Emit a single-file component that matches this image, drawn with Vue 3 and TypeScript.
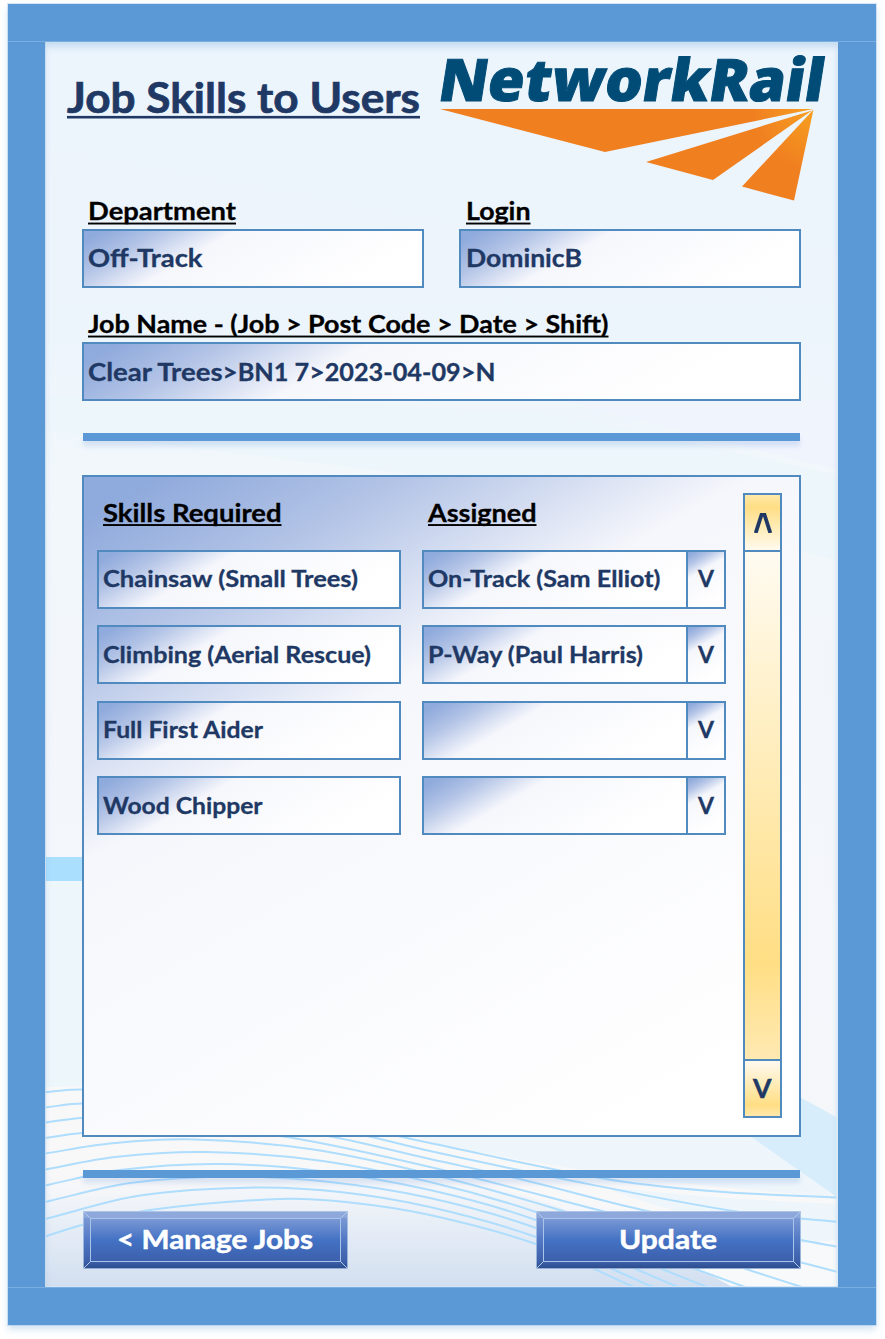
<script setup lang="ts">
import { h, type FunctionalComponent } from 'vue'

interface LabelProps {
  text: string
  width: number
  size: number
  underline?: number
  cuts?: number[]
}

// Text fitted to a fixed advance width; the box is exactly as tall as the capitals.
// With cuts, the text is broken around each ">" and every piece starts at its own stop.
const Label: FunctionalComponent<LabelProps> = (p) => {
  const cap = Math.round(p.size * 0.72 * 10) / 10
  const base = { x: 0, y: cap, 'font-size': p.size, fill: 'currentColor' }
  const cuts = p.cuts
  const body = cuts
    ? h('text', base, p.text.split(/(>)/).map((s, i) =>
        h('tspan', { x: cuts[i], textLength: cuts[i + 1] - cuts[i], lengthAdjust: 'spacingAndGlyphs' }, s)))
    : h('text', { ...base, textLength: p.width, lengthAdjust: 'spacingAndGlyphs' }, p.text)
  const kids = [body]
  if (p.underline) {
    kids.push(h('rect', { x: 0, y: cap + p.underline * 1.15, width: p.width, height: p.underline, fill: 'currentColor', stroke: 'none' }))
  }
  return h('svg', { class: 'label', width: p.width, height: cap }, kids)
}
Label.props = ['text', 'width', 'size', 'underline', 'cuts']

const jobStops = [0, 134.5, 149.7, 221.2, 236.7, 372.7, 387.5, 407.5]

interface Row { skill: string; skillW: number; who: string; whoW: number }
const rows: Row[] = [
  { skill: 'Chainsaw (Small Trees)', skillW: 255, who: 'On-Track (Sam Elliot)', whoW: 232.5 },
  { skill: 'Climbing (Aerial Rescue)', skillW: 268, who: 'P-Way (Paul Harris)', whoW: 215 },
  { skill: 'Full First Aider', skillW: 160, who: '', whoW: 0 },
  { skill: 'Wood Chipper', skillW: 159.5, who: '', whoW: 0 },
]

const buttons = [
  { text: '< Manage Jobs', width: 196 },
  { text: 'Update', width: 98 },
]

type Pt = [number, number]
const waves: Pt[][] = [
  [[45, 1092], [82, 1089.5], [230, 1096], [398, 1136], [430, 1143], [600, 1178], [710, 1191], [838, 1197.5]],
  [[45, 1107.5], [82, 1103.5], [230, 1107], [367, 1136], [430, 1151], [558, 1178], [733, 1211], [838, 1222]],
  [[45, 1122.5], [82, 1118], [200, 1115], [333, 1137], [430, 1159], [520, 1179], [647, 1211], [838, 1247]],
  [[45, 1138], [82, 1133], [185, 1127], [287, 1137], [430, 1167], [602, 1211], [838, 1272]],
  [[45, 1153.5], [110, 1143.5], [195, 1139.5], [310, 1149], [430, 1174], [563, 1211], [802, 1287]],
  [[45, 1169.5], [115, 1157], [205, 1152], [315, 1160], [430, 1182], [536, 1212], [745, 1287]],
  [[45, 1185.5], [120, 1170], [217, 1164], [320, 1171], [430, 1190], [536, 1220], [707, 1287]],
  [[45, 1202], [130, 1183], [235, 1176.5], [330, 1182], [430, 1198], [536, 1228], [678, 1287]],
  [[45, 1219], [140, 1195.5], [255, 1187.5], [340, 1192], [430, 1207], [536, 1237], [653, 1287]],
  [[45, 1236.5], [82, 1225], [150, 1210], [280, 1199], [350, 1202.5], [430, 1215], [536, 1244], [634, 1287]],
]

// Smooth curve through the points (Catmull-Rom converted to cubic Béziers).
function curve(p: Pt[]): string {
  let d = `M${p[0][0]} ${p[0][1]}`
  for (let i = 0; i < p.length - 1; i++) {
    const a = p[Math.max(0, i - 1)], b = p[i], c = p[i + 1], e = p[Math.min(p.length - 1, i + 2)]
    const dx = c[0] - b[0]
    const m1 = (c[1] - a[1]) / (c[0] - a[0])
    const m2 = (e[1] - b[1]) / (e[0] - b[0])
    d += `C${b[0] + dx / 3} ${b[1] + (m1 * dx) / 3} ${c[0] - dx / 3} ${c[1] - (m2 * dx) / 3} ${c[0]} ${c[1]}`
  }
  return d
}
</script>

<template>
  <div class="window">
    <div class="frame">
      <div class="bar top"></div>
      <div class="page">
        <svg class="backdrop" viewBox="45 42 793 1245" width="793" height="1245">
          <defs>
            <linearGradient id="haze" gradientUnits="userSpaceOnUse" x1="0" y1="1165" x2="0" y2="1287">
              <stop offset="0" stop-color="#f5f7f9" stop-opacity="0" />
              <stop offset="0.5" stop-color="#e6edf6" />
              <stop offset="1" stop-color="#d2dff0" />
            </linearGradient>
          </defs>
          <path d="M45 42H838V250L440 222L45 150Z" fill="#ecf4fc" />
          <path d="M45 395L300 400L560 415L838 475V560L500 485L45 430Z" fill="#edf6fa" />
          <path d="M560 400H838V470Z" fill="#f0f4fd" />
          <path d="M45 1087V881H84V1087Z" fill="#edf6fa" />
          <rect x="45" y="857" width="60" height="24" fill="#aadffe" />
          <path d="M300 1130H745L838 1200V1260Q640 1215 400 1130Z" fill="#eef6fb" />
          <path d="M45 1087Q260 1080 430 1142Q600 1180 838 1197V1230Q600 1210 400 1180L45 1200Z" fill="#f9f8f8" opacity=".85" />
          <path d="M600 1186Q710 1199 838 1204V1245Q700 1225 600 1186Z" fill="#eef6fb" />
          <path d="M45 1165H400Q570 1195 733 1287H45Z" fill="url(#haze)" />
          <path d="M733 1287Q700 1269 670 1255L838 1240V1287Z" fill="#f8f9fa" />
          <path d="M796 1095L838 1118V1198L740 1129Z" fill="#d8edfb" />
          <path v-for="(w, i) in waves" :key="i" :d="curve(w)" fill="none" stroke="#aeddfd" stroke-width="2" />
        </svg>

        <header class="head">
          <h1 class="title"><Label text="Job Skills to Users" :width="353" :size="41.5" :underline="2.6" /></h1>
          <svg class="logo" viewBox="440 56 388 147" width="388" height="147">
            <defs>
              <radialGradient id="glow" gradientUnits="userSpaceOnUse" cx="814" cy="109" r="62">
                <stop offset="0" stop-color="#f7a020" />
                <stop offset="1" stop-color="#f07f20" />
              </radialGradient>
            </defs>
            <text transform="translate(436.500 101) skewX(-9)" textLength="385" lengthAdjust="spacingAndGlyphs" class="brand">NetworkRail</text>
            <g fill="url(#glow)">
              <path d="M440 109H813L605 152Z" />
              <path d="M646 162L812 110.500L713 180Z" />
              <path d="M742 186.500L813.500 109.500L794 200.500Z" />
            </g>
          </svg>
        </header>

        <main class="body">
          <div class="pair">
            <div class="field">
              <Label text="Department" :width="148" :size="24.2" :underline="1.9" />
              <div class="box"><Label text="Off-Track" :width="114.5" :size="24.5" /></div>
            </div>
            <div class="field login">
              <Label text="Login" :width="64.5" :size="24.2" :underline="1.9" />
              <div class="box"><Label text="DominicB" :width="116" :size="24.5" /></div>
            </div>
          </div>
          <div class="field job">
            <Label text="Job Name - (Job > Post Code > Date > Shift)" :width="520.5" :size="24.2" :underline="1.9" />
            <div class="box"><Label text="Clear Trees>BN1 7>2023-04-09>N" :width="407.500" :size="24.5" :cuts="jobStops" /></div>
          </div>
          <div class="rule"></div>

          <section class="panel">
            <div class="table">
              <div class="cols">
                <div><Label text="Skills Required" :width="178.500" :size="24.8" :underline="1.9" /></div>
                <div><Label text="Assigned" :width="108.500" :size="24.8" :underline="1.9" /></div>
              </div>
              <div v-for="r in rows" :key="r.skill" class="row">
                <div class="box cell"><Label :text="r.skill" :width="r.skillW" :size="23" /></div>
                <div class="select">
                  <div class="box value"><Label v-if="r.who" :text="r.who" :width="r.whoW" :size="23" /></div>
                  <div class="box drop"><Label text="V" :width="16" :size="23" /></div>
                </div>
              </div>
            </div>
            <div class="scroll">
              <div class="arrow up">
                <svg width="18" height="20" viewBox="0 0 18 20"><path d="M1.700 20L7.600 1.500H10.400L16.300 20" /></svg>
              </div>
              <div class="track"></div>
              <div class="arrow down"><Label text="V" :width="18.500" :size="27.5" /></div>
            </div>
          </section>

          <div class="rule low"></div>
          <div class="actions">
            <button v-for="b in buttons" :key="b.text" class="btn">
              <svg class="edges" width="265" height="58" viewBox="0 0 265 58">
                <path d="M0 0L8 8M265 0L257 8M0 58L8 50M265 58L257 50" />
              </svg>
              <span class="face"><Label :text="b.text" :width="b.width" :size="27.5" /></span>
            </button>
          </div>
        </main>
      </div>
      <div class="bar"></div>
    </div>
  </div>
</template>

<style>
body { background: #fff; }
</style>

<style scoped>
* { box-sizing: border-box; }
.window {
  width: 885px;
  height: 1339px;
  padding: 4px 9px 14px 8px;
  overflow: hidden;
  font-family: Lato, "Liberation Sans", sans-serif;
  font-weight: 700;
}
.frame {
  height: 1321px;
  display: flex;
  flex-direction: column;
  background: #5a99d6;
  box-shadow: 0 4px 7px rgba(91, 155, 213, 0.3), 0 0 0 1px #dbe8f6;
}
.bar { height: 38px; border-top: 1px solid #79aee0; }
.bar.top { border-top: 0; border-bottom: 1px solid #79aee0; }
.page {
  position: relative;
  height: 1245px;
  margin: 0 38px 0 37px;
  background: linear-gradient(#edf4fc, #edf5fc 24%, #f1f7fb 34%, #f3f6fb 60%, #f5f7fa);
}
.page::after {
  content: "";
  position: absolute;
  inset: 0;
  pointer-events: none;
  box-shadow: inset 0 5px 6px rgba(91, 155, 213, 0.26), inset 1px -1px 0 rgba(214, 230, 246, 0.9), inset -2px 0 1px rgba(235, 244, 252, 0.9);
}
.backdrop { position: absolute; left: 0; top: 0; display: block; }
.label { display: block; overflow: visible; flex: none; stroke: currentColor; stroke-width: 0.3px; }
.head {
  position: relative;
  height: 161px;
  display: flex;
  padding-left: 22px;
  align-items: flex-start;
}
.title { margin: 41px 0 0; width: 373px; color: #203864; }
.title .label { stroke-width: 0.7px; }
.logo { margin-top: 14px; display: block; overflow: visible; }
.brand {
  font-family: "Open Sans", sans-serif;
  font-size: 58.500px;
  font-weight: 800;
  fill: #004c77;
  stroke: #004c77;
  stroke-width: 1px;
}
.body { position: relative; padding: 0 37px; color: #000; }
.pair { display: flex; justify-content: space-between; }
.field { width: 342px; }
.field > .label { margin: 0 0 8.600px 6px; }
.login > .label { margin-left: 7px; }
.job { width: 719px; margin-top: 28px; }
.box {
  height: 59px;
  padding: 0 0 1.500px 4px;
  display: flex;
  align-items: center;
  border: 2px solid #508abf;
  color: #203864;
  background: linear-gradient(150deg, #8faadc 4%, #b2c3e6 17%, #f6f7fc 35%, #fff 84%);
}
.login .box { padding-left: 5px; }
.job .box { padding-bottom: 0; }
.rule {
  height: 8px;
  margin: 32px 1px 0;
  background: #5a99d6;
  box-shadow: 0 5px 5px rgba(91, 140, 213, 0.2);
}
.panel {
  height: 662px;
  margin-top: 34px;
  padding: 16px 17px 0 13px;
  display: flex;
  justify-content: space-between;
  border: 2px solid #508abf;
  background: linear-gradient(150deg, #8faadc 4%, #b2c3e6 17%, #f6f7fc 36%, #fff 92%);
}
.table { width: 629px; padding-top: 11.500px; }
.cols { height: 45.500px; display: grid; grid-template-columns: 325px 1fr; padding-left: 6px; }
.row { display: flex; justify-content: space-between; height: 75.500px; }
.cell { width: 304px; }
.select { display: flex; width: 304px; }
.value { width: 266px; }
.drop { width: 40px; margin-left: -2px; padding: 0 0 1.500px; justify-content: center; }
.scroll { width: 39px; height: 625px; display: flex; flex-direction: column; }
.arrow, .track { border: 2px solid #508abf; }
.arrow { height: 59px; display: flex; align-items: center; justify-content: center; color: #203864; }
.arrow path { fill: none; stroke: #203864; stroke-width: 3.800px; }
.up { padding-top: 2px; background: linear-gradient(#ffe9aa, #ffde84 22%, #fffaee); }
.down { padding-bottom: 2px; background: linear-gradient(#fffaf0, #ffde84 80%, #ffe8ac); }
.down .label { stroke-width: 0.5px; }
.track { flex: 1; margin: -2px 0; background: linear-gradient(#fffbf1, #ffde84 81%, #ffe9b2); }
.low { margin-top: 33px; }
.actions { display: flex; justify-content: space-between; margin: 33px 0 0 1px; }
.btn {
  position: relative;
  width: 265px;
  height: 58px;
  padding: 7px;
  display: block;
  border: 0;
  box-shadow: inset 0 0 0 1px rgba(183, 205, 234, 0.75);
  background:
    linear-gradient(#8ea8dc, #8ea8dc) top / 100% 7px no-repeat,
    linear-gradient(#3a5ea8, #2b4a8a) bottom / 100% 7px no-repeat,
    linear-gradient(#88a3da, #5278c4 50%, #35579f);
  font: inherit;
}
.edges { position: absolute; left: 0; top: 0; fill: none; stroke: #b0c8ea; stroke-width: 1px; }
.btn .label { stroke-width: 0.5px; }
.face {
  position: relative;
  height: 44px;
  padding: 0 2px 2px 0;
  display: flex;
  align-items: center;
  justify-content: center;
  border: 1px solid #a9c4ea;
  color: #fff;
  background: linear-gradient(#7a98d4, #4472c4 50%, #3c60ac);
}
</style>
